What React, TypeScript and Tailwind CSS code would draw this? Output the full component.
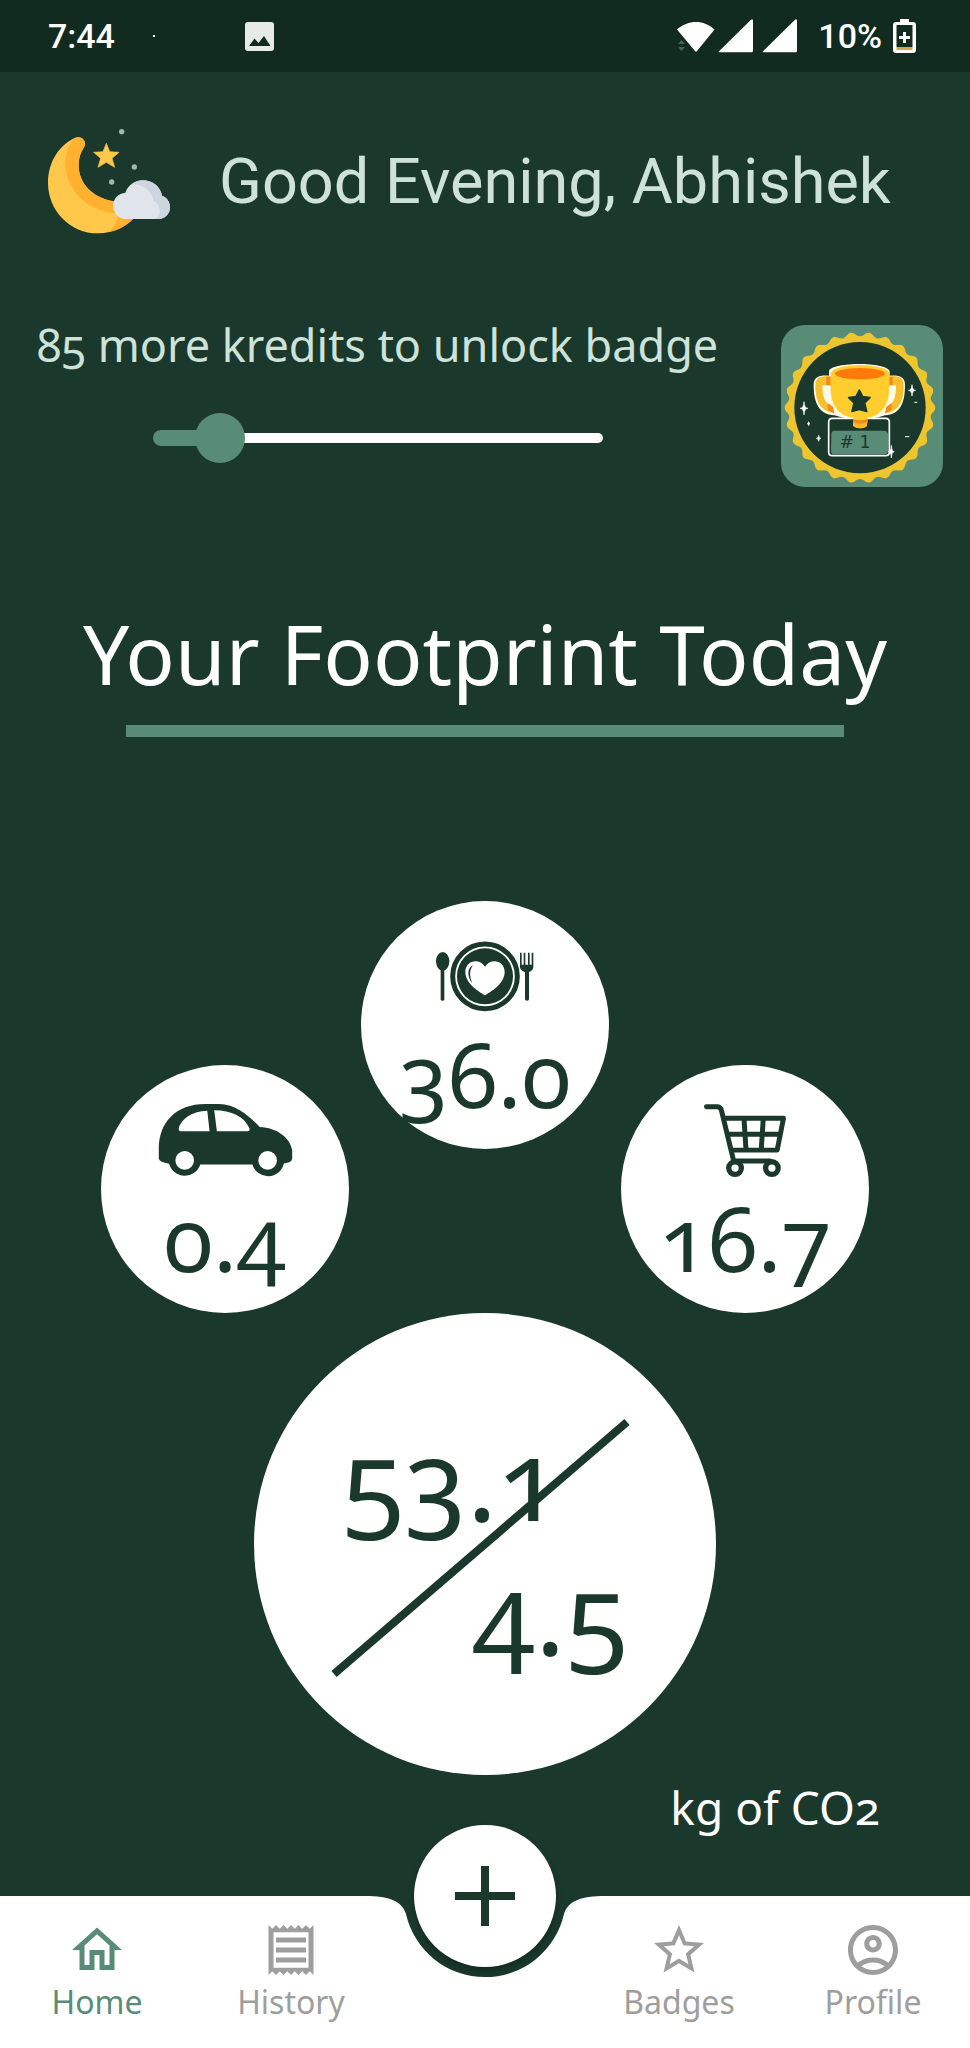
import type { ReactNode } from "react";
import { MdOutlineAccountCircle, MdOutlineHome, MdOutlineReceipt, MdStarBorder } from "react-icons/md";

function StatusBar() {
  return (
    <div className="flex h-[72px] items-center justify-between bg-[#122b21] pr-[54px] pl-12 font-['Roboto',sans-serif] text-[34px] font-medium text-white">
      <div className="flex items-center">
        <span>7:44</span>
        <span className="ml-[38px] size-[2px] bg-white" />
        <svg className="ml-[90px] size-[29px]" viewBox="0 0 29 29" aria-label="Picture saved">
          <rect width="29" height="29" rx="3" fill="#e6ebe8" />
          <path d="M4 24l5.500-7.500 4 4.500 5.500-7L25.500 24z" fill="#122b21" />
        </svg>
      </div>
      <div className="flex items-center">
        <svg className="h-[34px] w-[122px]" viewBox="0 0 122 34" fill="#fff" aria-label="Wi-Fi and signal">
          <path d="M1 10.500C12 .5 28 .5 38.500 10.500L21 32q-1 1.500-2 0z" />
          <path d="M2 25l3.500-4L9 25zM2 28h7l-3.500 4z" fill="#4b6259" />
          <path d="M43 32.200L75 .8q2-1.500 2 1v30q0 1.500-1.500 1.500H43.500q-1.500 0-.5-1.100z" />
          <path d="M87 32.200L119 .8q2-1.500 2 1v30q0 1.500-1.500 1.500H87.500q-1.500 0-.5-1.100z" />
        </svg>
        <span className="ml-5">10%</span>
        <svg className="ml-[11px] h-[34px] w-[23px]" viewBox="0 0 23 34" aria-label="Battery charging">
          <path d="M7 0h9v3h4q3 0 3 3v25q0 3-3 3H3q-3 0-3-3V6q0-3 3-3h4z" fill="#fff" />
          <path d="M3.500 6h16v22h-16z" fill="#122b21" />
          <path d="M3.500 28h16v3h-16z" fill="#dca54a" />
          <path d="M10 13h3v4h4v3h-4v4h-3v-4H6v-3h4z" fill="#fff" />
        </svg>
      </div>
    </div>
  );
}

function MoonIcon() {
  return (
    <svg className="h-[107px] w-[122px] shrink-0" viewBox="144 384 366 321" aria-hidden="true">
      <path d="M226 413C180 432 144 484 144 548C144 632 210 700 294 700C340 700 385 679 412 642L340 604C280 594 236 552 236 496C236 470 244 456 252 442C262 424 246 406 226 413z" fill="#ffc84a" />
      <path d="M226 413C206 430 196 462 196 490C196 570 262 634 346 640C362 641 352 676 322 697C360 690 390 672 412 642L340 604C280 594 236 552 236 496C236 470 244 456 252 442C262 424 246 406 226 413z" fill="#ffb12f" />
      <path d="M319 430l10 25 28 2-21 18 8 27-25-15-25 15 8-27-21-18 28-2z" fill="#ffc84a" stroke="#ffc84a" strokeWidth="2" strokeLinejoin="round" />
      <g fill="#9fb9ae">
        <circle cx="365" cy="395" r="8" />
        <circle cx="403" cy="501" r="8" />
        <circle cx="335" cy="546" r="8" />
      </g>
      <path d="M371 657a40 40 0 0 1 5-79C384 556 404 541 428 541C458 541 481 560 486 587C501 592 510 606 510 622C510 642 495 657 476 657z" fill="#dfe5ea" />
      <path d="M396 553C430 552 458 574 460 604C474 610 480 624 479 638C478 647 472 654 462 657H476C495 657 510 642 510 622C510 606 501 592 486 587C481 560 458 541 428 541C416 541 405 545 396 553z" fill="#cdd5df" />
    </svg>
  );
}

const CRESTS = 26;

function scallopPath(cx: number, cy: number) {
  const step = (Math.PI * 2) / CRESTS;
  let d = "";
  for (let i = 0; i < CRESTS; i++) {
    const a = i * step;
    const point = (r: number, t: number) => `${(cx + r * Math.sin(t)).toFixed(1)} ${(cy - r * Math.cos(t)).toFixed(1)}`;
    if (i === 0) d += `M${point(214, a)}`;
    d += `C${point(214, a + step * 0.2)} ${point(226, a + step * 0.3)} ${point(226, a + step * 0.5)}`;
    d += `C${point(226, a + step * 0.7)} ${point(214, a + step * 0.8)} ${point(214, a + step)}`;
  }
  return d + "Z";
}

function sparkle(x: number, y: number, w: number, h: number) {
  return `M${x} ${y - h}Q${x + 1} ${y} ${x + w} ${y}Q${x + 1} ${y} ${x} ${y + h}Q${x - 1} ${y} ${x - w} ${y}Q${x - 1} ${y} ${x} ${y - h}z`;
}

function TrophyBadge() {
  return (
    <svg className="size-[162px] shrink-0 rounded-[24px] bg-[#588c77]" viewBox="66 45 486 486" role="img" aria-label="Number one trophy badge">
      <path d={scallopPath(303, 293)} fill="#edc52f" />
      <circle cx="303" cy="293" r="197" fill="#1a392c" />
      <path d="M210 197C182 195 164 200 164 224C164 280 180 312 226 316C244 322 262 326 284 327H322C344 326 362 322 378 316C424 312 438 280 438 224C438 200 420 195 392 197V184C388 168 340 162 303 162C260 162 212 168 210 184z" fill="#fffbe8" />
      <path d="M215 199C184 197 169 202 169 226C169 274 184 304 226 310L216 286C198 280 190 262 190 226H215z" fill="#f5c02b" />
      <path d="M391 199C420 197 434 202 434 226C434 274 420 304 380 310L388 286C404 280 411 262 411 226H391z" fill="#f5c02b" />
      <path d="M202 200h13v26h-13zM391 200h10v26h-10zM206 280l16 10 4 20-20-10zM398 280l-16 10-4 20 20-10z" fill="#f58a1c" />
      <path d="M215 190V240C215 286 242 318 282 324L284 345C286 358 322 358 324 345L326 324C364 318 390 286 390 240V190z" fill="#ffcd2e" />
      <path d="M282 326q20 10 44 0v14q-20 16-44 0z" fill="#f58a1c" />
      <path d="M282 336q22 10 42 0v12q-20 14-42 0z" fill="#ffb92b" />
      <ellipse cx="303" cy="190" rx="87" ry="25" fill="#ffcd2e" />
      <ellipse cx="303" cy="191" rx="75" ry="17" fill="#ff7a0b" />
      <path d="M301 240l10 20 22 3-16 16 6 25-22-6-22 6 6-25-16-16 22-3z" fill="#1a392c" stroke="#1a392c" strokeWidth="5" strokeLinejoin="round" />
      <path d="M282 325H220Q209 325 209 336V426Q209 437 220 437H380Q391 437 391 426V336Q391 325 380 325H326" fill="none" stroke="#fff" strokeWidth="5" />
      <path d="M217 372q0-10 10-10h146q12 0 14 10v50q0 11-11 11H226q-10 0-10-11z" fill="#588c77" />
      <text x="288" y="414" textAnchor="middle" fontSize="52" fill="#1a392c" className="font-['DejaVu_Sans',sans-serif]">
        # 1
      </text>
      <path
        d={[sparkle(135, 295, 12, 20), sparkle(459, 241, 11, 17), sparkle(179, 385, 7, 9), sparkle(149, 341, 4, 6), sparkle(397, 425, 9, 19)].join("")}
        fill="#fff"
        stroke="#fff"
        strokeWidth="2"
      />
      <path d="M466 277h9M438 380h13" stroke="#fff" strokeWidth="3" />
    </svg>
  );
}

function UnlockProgress() {
  const value = 15;
  return (
    <section className="mt-[78px] flex items-start pr-[27px]">
      <div className="flex flex-1 flex-col items-center">
        <label htmlFor="kredits" className="text-[45px] leading-[64px] whitespace-nowrap text-[#cfe2da] oldstyle-nums">
          85 more kredits to unlock badge
        </label>
        <div className="relative mt-9 flex h-[50px] w-[450px] items-center">
          <span className="h-4 rounded-l-full bg-[#588c77]" style={{ width: `${value}%` }} />
          <span className="h-[10px] flex-1 rounded-r-full bg-white" />
          <input
            id="kredits"
            type="range"
            min={0}
            max={100}
            defaultValue={value}
            className="absolute inset-y-0 -left-[25px] w-[500px] appearance-none bg-transparent [&::-webkit-slider-thumb]:size-[50px] [&::-webkit-slider-thumb]:appearance-none [&::-webkit-slider-thumb]:rounded-full [&::-webkit-slider-thumb]:bg-[#588c77]"
          />
        </div>
      </div>
      <div className="mt-3 ml-[26px]">
        <TrophyBadge />
      </div>
    </section>
  );
}

function MealIcon() {
  return (
    <svg className="h-[73px] w-[98px]" viewBox="289 178 294 219" fill="#1a392c" aria-hidden="true">
      <circle cx="436" cy="287" r="97" fill="none" stroke="#1a392c" strokeWidth="15" />
      <circle cx="436" cy="287" r="84" />
      <path d="M436 344C420 334 377 310 377 274C377 240 418 230 436 258C454 230 495 240 495 274C495 310 452 334 436 344z" fill="#fff" />
      <path d="M400 253C380 262 384 292 398 308C388 286 390 266 400 253z" />
      <ellipse cx="309" cy="242" rx="20" ry="28" />
      <rect x="303" y="262" width="11" height="98" rx="4" />
      <path d="M541 216h5v36h6v-36h5v36h8v-36h5v36h6v-36h5v44q-1 10-13 14v82q0 4-6 4t-6-4v-82q-14-4-15-14z" />
    </svg>
  );
}

function CarIcon() {
  return (
    <svg className="h-[73px] w-[135px]" viewBox="203 161 404 220" aria-hidden="true">
      <path
        d="M204 300C202 220 252 161 345 161H385C440 163 474 196 508 230C560 232 600 262 606 300V326Q604 338 581 340A49 49 0 0 1 486 343H329A49 49 0 0 1 235 341Q206 336 204 326zM264 236Q264 243 270 243H357L350 181C305 182 270 206 264 236zM371 180L379 243H472Q480 242 477 234C462 200 424 180 371 180z"
        fill="#1a392c"
        fillRule="evenodd"
      />
      <circle cx="282" cy="331" r="28" fill="#fff" />
      <circle cx="532" cy="331" r="28" fill="#fff" />
    </svg>
  );
}

function CartIcon() {
  return (
    <svg className="h-[73px] w-[82px]" viewBox="282 161 246 220" fill="none" stroke="#1a392c" strokeWidth="15" strokeLinecap="round" strokeLinejoin="round" aria-hidden="true">
      <path d="M289 169H322Q332 170 334 180L371 333H480" />
      <path d="M345 204H521L502 300H364M354 252H509M402 206L408 298M460 206L454 298" />
      <circle cx="375" cy="354" r="19" strokeWidth="16" />
      <circle cx="486" cy="354" r="19" strokeWidth="16" />
    </svg>
  );
}

function Bubble({ icon, value, className = "" }: { icon: ReactNode; value: string; className?: string }) {
  return (
    <div className={`flex size-[248px] flex-col items-center rounded-full bg-white pt-[39px] text-[#1a392c] ${className}`}>
      {icon}
      <span className="text-[90px] leading-[120px] oldstyle-nums">{value}</span>
    </div>
  );
}

function Total() {
  return (
    <div className="relative mx-auto flex size-[462px] flex-col rounded-full bg-white px-[88px] pt-[97px] text-[114px] leading-[134px] text-[#1a392c] oldstyle-nums">
      <span className="self-start">53.1</span>
      <span className="self-end">4.5</span>
      <svg className="absolute inset-0 size-full" viewBox="0 0 462 462" aria-hidden="true">
        <path d="M80 361L373 109" stroke="#1a392c" strokeWidth="8" />
      </svg>
    </div>
  );
}

function NavItem({ icon, label, active = false }: { icon: ReactNode; label: string; active?: boolean }) {
  return (
    <a href={`#${label.toLowerCase()}`} className={`flex flex-col items-center pt-6 text-[32px] leading-[44px] ${active ? "text-[#588c77]" : "text-[#9e9e9e]"}`}>
      {icon}
      <span>{label}</span>
    </a>
  );
}

function BottomNav() {
  return (
    <nav className="relative mt-auto h-[152px]">
      <div className="absolute inset-0 flex" aria-hidden="true">
        <div className="flex-1 bg-white" />
        <svg className="h-full w-[240px]" viewBox="0 0 240 152" fill="#fff">
          <path d="M0 0C24 0 37 5 41 18A81 81 0 0 0 199 18C203 5 216 0 240 0V152H0Z" />
        </svg>
        <div className="flex-1 bg-white" />
      </div>
      <div className="relative grid grid-cols-5">
        <NavItem active icon={<MdOutlineHome className="size-[60px]" />} label="Home" />
        <NavItem icon={<MdOutlineReceipt className="size-[60px]" />} label="History" />
        <div className="flex justify-center">
          <button aria-label="Add entry" className="-mt-[71px] flex size-[142px] items-center justify-center rounded-full bg-white shadow-[0_4px_6px_rgba(0,0,0,0.25)]">
            <svg className="size-[60px]" viewBox="0 0 60 60" aria-hidden="true">
              <path d="M0 30H60M30 0V60" stroke="#1a392c" strokeWidth="8" />
            </svg>
          </button>
        </div>
        <NavItem icon={<MdStarBorder className="size-[60px]" />} label="Badges" />
        <NavItem icon={<MdOutlineAccountCircle className="size-[60px]" />} label="Profile" />
      </div>
    </nav>
  );
}

export default function App() {
  return (
    <div className="flex min-h-screen flex-col bg-[#1a392c] font-['Noto_Sans',sans-serif]">
      <StatusBar />
      <main>
        <header className="mt-14 flex items-center pl-12">
          <MoonIcon />
          <h1 className="ml-[49px] font-['Roboto',sans-serif] text-[63px] leading-[72px] whitespace-nowrap text-[#cfe2da]">Good Evening, Abhishek</h1>
        </header>
        <UnlockProgress />
        <section className="flex flex-col items-center">
          <h2 className="mt-[106px] text-[82px] leading-[120px] whitespace-nowrap text-white">Your Footprint Today</h2>
          <div className="mt-3 h-3 w-[74%] bg-[#588c77]" />
          <div className="mt-[164px] flex items-end gap-3">
            <Bubble icon={<CarIcon />} value="0.4" />
            <Bubble icon={<MealIcon />} value="36.0" className="mb-[164px]" />
            <Bubble icon={<CartIcon />} value="16.7" />
          </div>
          <Total />
          <p className="self-end pr-[90px] text-[46px] leading-[64px] text-white oldstyle-nums">kg of CO2</p>
        </section>
      </main>
      <BottomNav />
    </div>
  );
}
